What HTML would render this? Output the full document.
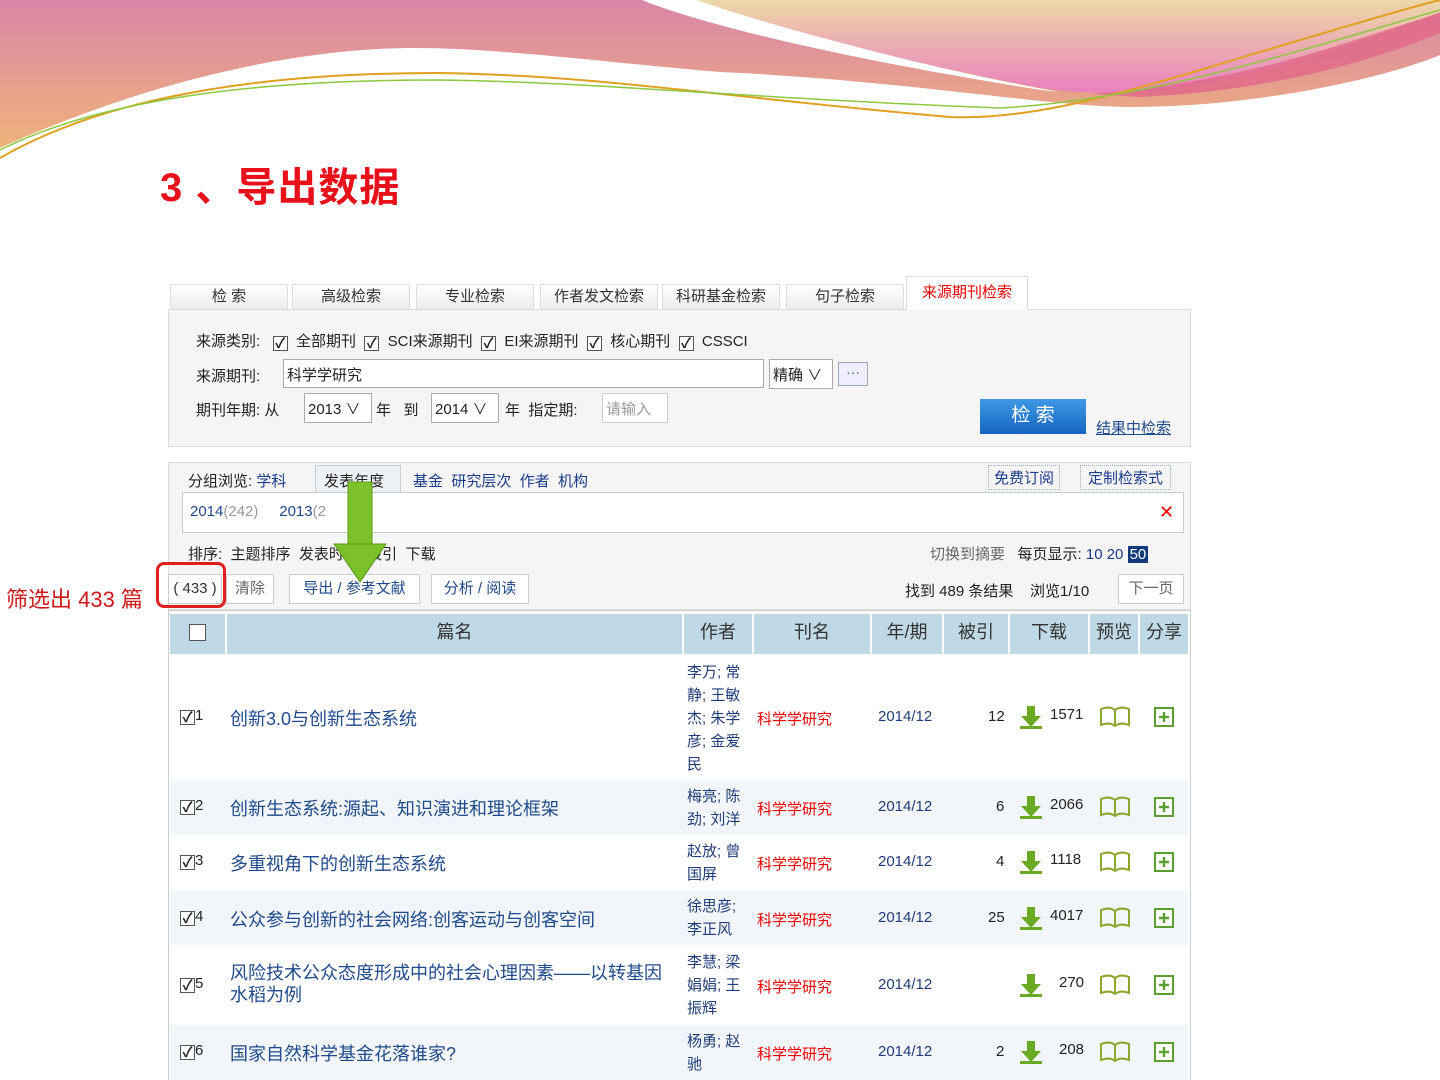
<!DOCTYPE html>
<html><head><meta charset="utf-8"><style>
*{margin:0;padding:0;box-sizing:border-box}
body{width:1440px;height:1080px;overflow:hidden;background:#fff;position:relative;font-family:"Liberation Sans","Noto Sans CJK SC",sans-serif;color:#222}
.a{position:absolute;white-space:nowrap}
.tab{position:absolute;top:284px;height:26px;background:linear-gradient(#fff,#ececec);border:1px solid #ddd;font-size:15px;text-align:center;line-height:24px;color:#333}
.cb{display:inline-block;width:15px;height:15px;border:1px solid #555;background:#fff;vertical-align:-2px;font-size:14px;line-height:12px;text-align:center;font-weight:bold}
.f{font-size:15px;color:#222}
.btn{position:absolute;top:574px;height:30px;border:1px solid #ccc;background:#fff;font-size:15px;line-height:28px;text-align:center;color:#1f4a8c}
.th{position:absolute;top:614px;height:40px;background:#c0d9e6;font-size:18px;line-height:36px;text-align:center;color:#333}
.blue{color:#1a3c8a}
.row{position:absolute;left:170px;width:1018px}
.t{font-size:18px;color:#1f4a8c}
.au{font-size:15px;color:#1f3d7a;line-height:23px;white-space:normal;width:62px}
.jn{font-size:15px;color:#e00}
.yr{font-size:15px;color:#1f3d7a}
.n{font-size:15px;color:#222}
</style></head><body>
<svg class="a" style="left:0;top:0" width="1440" height="170" viewBox="0 0 1440 170">
<defs>
<linearGradient id="g1" x1="0" y1="0" x2="0" y2="1"><stop offset="0" stop-color="#da86a8"/><stop offset="1" stop-color="#efb27a"/></linearGradient>
<linearGradient id="g2" x1="0" y1="0" x2="0" y2="1"><stop offset="0" stop-color="#ecd8a8"/><stop offset="1" stop-color="#ea80be"/></linearGradient>
</defs>
<path d="M0 0 H1440 V55 C1380 80 1250 107 1133 107 C1050 107 900 80 720 72 C600 62 500 48 413 48 C300 48 150 80 0 148 Z" fill="url(#g1)"/>
<path d="M697 0 C760 25 900 60 1041 88 C1100 96 1150 94 1200 85 C1300 65 1380 35 1440 12 V0 Z" fill="url(#g2)"/>
<path d="M642 0 C690 20 820 55 1041 90 L1060 92 C960 75 780 30 697 0 Z" fill="#fff"/>
<path d="M1090 94 C1250 82 1350 40 1440 13 V33 C1350 70 1250 92 1140 97 Z" fill="#e06888" opacity=".8"/>
<path d="M0 158 C100 100 250 73 436 73 C600 75 720 97 950 117 C1020 120 1100 100 1200 70 C1300 40 1400 10 1440 0" fill="none" stroke="#e0a020" stroke-width="2"/>
<path d="M0 150 C100 100 250 80 436 80 C600 82 720 97 1000 108 C1150 100 1300 50 1440 10" fill="none" stroke="#8cc840" stroke-width="1.5"/>
</svg>
<div class="a" style="left:160px;top:155px;font-size:40px;font-weight:bold;color:#e8101a;letter-spacing:1px">3 、导出数据</div>

<div class="a" style="left:168px;top:309px;width:1023px;height:138px;background:#f5f5f5;border:1px solid #ddd"></div>
<div class="tab" style="left:170px;width:118px">检 索</div>
<div class="tab" style="left:292px;width:118px">高级检索</div>
<div class="tab" style="left:416px;width:118px">专业检索</div>
<div class="tab" style="left:540px;width:118px">作者发文检索</div>
<div class="tab" style="left:662px;width:118px">科研基金检索</div>
<div class="tab" style="left:786px;width:118px">句子检索</div>
<div class="tab" style="left:906px;top:276px;height:34px;width:122px;background:#fff;border-bottom:none;color:#e00;line-height:32px">来源期刊检索</div>

<div class="a f" style="left:196px;top:330px">来源类别: &nbsp;&nbsp;<span class="cb">✓</span>&nbsp; 全部期刊 &nbsp;<span class="cb">✓</span>&nbsp; SCI来源期刊 &nbsp;<span class="cb">✓</span>&nbsp; EI来源期刊 &nbsp;<span class="cb">✓</span>&nbsp; 核心期刊 &nbsp;<span class="cb">✓</span>&nbsp; CSSCI</div>
<div class="a f" style="left:196px;top:365px">来源期刊:</div>
<div class="a f" style="left:283px;top:359px;width:481px;height:29px;border:1px solid #aaa;background:#fff;padding:4px 3px">科学学研究</div>
<div class="a f" style="left:769px;top:359px;width:64px;height:30px;border:1px solid #aaa;background:#fff;padding:4px 3px">精确 ∨</div>
<div class="a" style="left:838px;top:362px;width:30px;height:24px;border:1px solid #9ab;background:#eef;color:#46a;text-align:center;font-size:14px;line-height:18px">···</div>
<div class="a f" style="left:196px;top:399px">期刊年期: 从</div>
<div class="a f" style="left:304px;top:393px;width:68px;height:30px;border:1px solid #aaa;background:#fff;padding:4px 3px">2013 ∨</div>
<div class="a f" style="left:376px;top:399px">年 &nbsp;&nbsp;到</div>
<div class="a f" style="left:431px;top:393px;width:68px;height:30px;border:1px solid #aaa;background:#fff;padding:4px 3px">2014 ∨</div>
<div class="a f" style="left:505px;top:399px">年 &nbsp;指定期:</div>
<div class="a f" style="left:602px;top:393px;width:66px;height:30px;border:1px solid #ccc;background:#fff;padding:4px 3px;color:#999">请输入</div>
<div class="a" style="left:980px;top:399px;width:106px;height:35px;background:linear-gradient(#3f98e6,#1565c0);color:#fff;font-size:19px;text-align:center;line-height:33px">检 索</div>
<div class="a" style="left:1096px;top:417px;font-size:15px;color:#1f4a8c;text-decoration:underline">结果中检索</div>

<div class="a" style="left:168px;top:462px;width:1023px;height:148px;background:#f5f5f5;border:1px solid #ddd"></div>
<div class="a f" style="left:188px;top:470px">分组浏览: <span class="blue">学科</span></div>
<div class="a" style="left:315px;top:465px;width:86px;height:28px;background:#eef1f4;border:1px solid #ccc;border-bottom:none"></div>
<div class="a f" style="left:324px;top:470px">发表年度</div>
<div class="a f blue" style="left:413px;top:470px">基金 &nbsp;研究层次 &nbsp;作者 &nbsp;机构</div>
<div class="a f blue" style="left:988px;top:465px;border:1px dotted #9ab;padding:1px 5px">免费订阅</div>
<div class="a f blue" style="left:1080px;top:465px;border:1px dotted #9ab;padding:1px 7px">定制检索式</div>
<div class="a" style="left:182px;top:492px;width:1002px;height:41px;background:#fff;border:1px solid #ccc"></div>
<div class="a f" style="left:190px;top:503px;color:#1f4a8c">2014<span style="color:#999">(242)</span> &nbsp;&nbsp;&nbsp;&nbsp;2013<span style="color:#999">(2</span></div>
<div class="a" style="left:1159px;top:502px;color:#e00;font-size:18px">✕</div>
<div class="a f" style="left:188px;top:543px">排序: &nbsp;主题排序 &nbsp;发表时间 &nbsp;被引 &nbsp;下载</div>
<div class="a f" style="left:930px;top:543px"><span style="color:#666">切换到摘要</span> &nbsp;&nbsp;每页显示: <span class="blue">10 20</span> <span style="background:#123a7a;color:#fff;padding:0 2px">50</span></div>
<div class="btn" style="left:168px;width:54px;color:#333">( 433 )</div>
<div class="btn" style="left:226px;width:48px;color:#666">清除</div>
<div class="btn" style="left:289px;width:131px">导出 / 参考文献</div>
<div class="btn" style="left:431px;width:98px">分析 / 阅读</div>
<div class="a f" style="left:905px;top:580px">找到 489 条结果 &nbsp;&nbsp;&nbsp;浏览1/10</div>
<div class="btn" style="left:1118px;width:66px;color:#666">下一页</div>
<div class="a" style="left:156px;top:562px;width:70px;height:46px;border:3px solid #e02020;border-radius:8px"></div>
<div class="a" style="left:6px;top:582px;font-size:22px;color:#d01818">筛选出 433 篇</div>
<svg class="a" style="left:333px;top:480px" width="54" height="104"><rect x="15" y="2" width="24" height="64" fill="#7bc22a" stroke="#5a9a1a"/><path d="M1 64 H53 L27 102Z" fill="#7bc22a" stroke="#5a9a1a"/></svg>

<div class="a" style="left:168px;top:610px;width:1023px;height:470px;border:1px solid #ccc;border-bottom:none"></div>
<div class="th" style="left:170px;width:55px"><span class="cb" style="width:17px;height:17px;vertical-align:-3px"></span></div>
<div class="th" style="left:227px;width:455px">篇名</div>
<div class="th" style="left:684px;width:68px">作者</div>
<div class="th" style="left:754px;width:116px">刊名</div>
<div class="th" style="left:872px;width:70px">年/期</div>
<div class="th" style="left:944px;width:64px">被引</div>
<div class="th" style="left:1010px;width:78px">下载</div>
<div class="th" style="left:1090px;width:48px">预览</div>
<div class="th" style="left:1140px;width:48px">分享</div>

<div class="row" style="top:780px;height:55px;background:#f2f5f9"></div>
<div class="row" style="top:890px;height:55px;background:#f2f5f9"></div>
<div class="row" style="top:1025px;height:55px;background:#f2f5f9"></div>

<svg width="0" height="0" style="position:absolute"><defs>
<g id="dl"><path d="M7 0h8v10h6l-10 11-10-11h6z" fill="#6aaa22"/><rect x="0" y="20" width="22" height="3" fill="#6aaa22"/></g>
<g id="bk"><path d="M2 3c5-2 10-2 14 1c4-3 9-3 14-1v16c-5-2-10-2-14 1c-4-3-9-3-14-1z" fill="none" stroke="#8aa830" stroke-width="2"/><path d="M16 4v16" stroke="#8aa830" stroke-width="2"/></g>
<g id="pl"><rect x="1" y="1" width="18" height="18" fill="#fff" stroke="#5aa030" stroke-width="2"/><path d="M10 5v10M5 10h10" stroke="#5aa030" stroke-width="2.4"/></g>
</defs></svg>

<div class="a n" style="left:180px;top:707px"><span class="cb">✓</span>1</div>
<div class="a t" style="left:230px;top:705px">创新3.0与创新生态系统</div>
<div class="a au" style="left:687px;top:661px">李万; 常静; 王敏杰; 朱学彦; 金爱民</div>
<div class="a jn" style="left:757px;top:708px">科学学研究</div>
<div class="a yr" style="left:878px;top:708px">2014/12</div>
<div class="a n" style="left:988px;top:708px">12</div>
<svg class="a" style="left:1020px;top:706px" width="24" height="24"><use href="#dl"/></svg>
<div class="a n" style="left:1050px;top:706px">1571</div>
<svg class="a" style="left:1099px;top:706px" width="34" height="24"><use href="#bk"/></svg>
<svg class="a" style="left:1154px;top:707px" width="21" height="21"><use href="#pl"/></svg>

<div class="a n" style="left:180px;top:797px"><span class="cb">✓</span>2</div>
<div class="a t" style="left:230px;top:795px">创新生态系统:源起、知识演进和理论框架</div>
<div class="a au" style="left:687px;top:785px">梅亮; 陈劲; 刘洋</div>
<div class="a jn" style="left:757px;top:798px">科学学研究</div>
<div class="a yr" style="left:878px;top:798px">2014/12</div>
<div class="a n" style="left:996px;top:798px">6</div>
<svg class="a" style="left:1020px;top:796px" width="24" height="24"><use href="#dl"/></svg>
<div class="a n" style="left:1050px;top:796px">2066</div>
<svg class="a" style="left:1099px;top:796px" width="34" height="24"><use href="#bk"/></svg>
<svg class="a" style="left:1154px;top:797px" width="21" height="21"><use href="#pl"/></svg>

<div class="a n" style="left:180px;top:852px"><span class="cb">✓</span>3</div>
<div class="a t" style="left:230px;top:850px">多重视角下的创新生态系统</div>
<div class="a au" style="left:687px;top:840px">赵放; 曾国屏</div>
<div class="a jn" style="left:757px;top:853px">科学学研究</div>
<div class="a yr" style="left:878px;top:853px">2014/12</div>
<div class="a n" style="left:996px;top:853px">4</div>
<svg class="a" style="left:1020px;top:851px" width="24" height="24"><use href="#dl"/></svg>
<div class="a n" style="left:1050px;top:851px">1118</div>
<svg class="a" style="left:1099px;top:851px" width="34" height="24"><use href="#bk"/></svg>
<svg class="a" style="left:1154px;top:852px" width="21" height="21"><use href="#pl"/></svg>

<div class="a n" style="left:180px;top:908px"><span class="cb">✓</span>4</div>
<div class="a t" style="left:230px;top:906px">公众参与创新的社会网络:创客运动与创客空间</div>
<div class="a au" style="left:687px;top:895px">徐思彦; 李正风</div>
<div class="a jn" style="left:757px;top:909px">科学学研究</div>
<div class="a yr" style="left:878px;top:909px">2014/12</div>
<div class="a n" style="left:988px;top:909px">25</div>
<svg class="a" style="left:1020px;top:907px" width="24" height="24"><use href="#dl"/></svg>
<div class="a n" style="left:1050px;top:907px">4017</div>
<svg class="a" style="left:1099px;top:907px" width="34" height="24"><use href="#bk"/></svg>
<svg class="a" style="left:1154px;top:908px" width="21" height="21"><use href="#pl"/></svg>

<div class="a n" style="left:180px;top:975px"><span class="cb">✓</span>5</div>
<div class="a t" style="left:230px;top:962px;line-height:22px;white-space:normal;width:440px">风险技术公众态度形成中的社会心理因素——以转基因水稻为例</div>
<div class="a au" style="left:687px;top:951px">李慧; 梁娟娟; 王振辉</div>
<div class="a jn" style="left:757px;top:976px">科学学研究</div>
<div class="a yr" style="left:878px;top:976px">2014/12</div>
<svg class="a" style="left:1020px;top:974px" width="24" height="24"><use href="#dl"/></svg>
<div class="a n" style="left:1059px;top:974px">270</div>
<svg class="a" style="left:1099px;top:974px" width="34" height="24"><use href="#bk"/></svg>
<svg class="a" style="left:1154px;top:975px" width="21" height="21"><use href="#pl"/></svg>

<div class="a n" style="left:180px;top:1042px"><span class="cb">✓</span>6</div>
<div class="a t" style="left:230px;top:1040px">国家自然科学基金花落谁家?</div>
<div class="a au" style="left:687px;top:1030px">杨勇; 赵驰</div>
<div class="a jn" style="left:757px;top:1043px">科学学研究</div>
<div class="a yr" style="left:878px;top:1043px">2014/12</div>
<div class="a n" style="left:996px;top:1043px">2</div>
<svg class="a" style="left:1020px;top:1041px" width="24" height="24"><use href="#dl"/></svg>
<div class="a n" style="left:1059px;top:1041px">208</div>
<svg class="a" style="left:1099px;top:1041px" width="34" height="24"><use href="#bk"/></svg>
<svg class="a" style="left:1154px;top:1042px" width="21" height="21"><use href="#pl"/></svg>
</body></html>
